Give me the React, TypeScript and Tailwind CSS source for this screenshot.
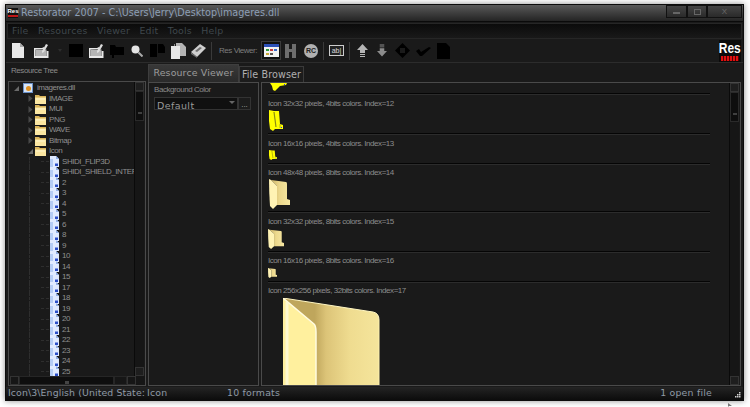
import React from "react";

const treeTop = ["IMAGE", "MUI", "PNG", "WAVE", "Bitmap"];
const iconRows = ["SHIDI_FLIP3D", "SHIDI_SHIELD_INTEF", "2", "3", "4", "5", "6", "8", "9", "10", "14", "15", "17", "18", "19", "20", "21", "22", "23", "24", "25"];

function TreeFolder() {
  return (
    <svg width="11" height="10" viewBox="0 0 11 10" className="shrink-0">
      <path d="M0 1h4l1 1h6v8H0z" fill="#d8b35a" />
      <path d="M0 3.500h11V10H0z" fill="#fbe7a2" />
      <path d="M1 4.500h9v1H1z" fill="#fff6d0" />
    </svg>
  );
}

function PageIcon() {
  return (
    <svg width="9" height="11" viewBox="0 0 9 11" className="shrink-0">
      <path d="M0 0h6l3 3v8H0z" fill="#dfeaff" />
      <path d="M0 3h3v8H0z" fill="#b4ccf4" />
      <path d="M6 0l3 3H6z" fill="#8fb0e8" />
      <rect x="5" y="7.500" width="3" height="2.500" fill="#2a4ec8" />
    </svg>
  );
}

function Arrow({ open }: { open?: boolean }) {
  return (
    <svg width="5" height="7" viewBox="0 0 5 7" className="shrink-0">
      {open ? <path d="M0 6l5-5v5z" fill="#6a6a6a" /> : <path d="M0.500 0l4 3.500-4 3.500z" fill="#4a4a4a" />}
    </svg>
  );
}

function Sep({ className = "" }: { className?: string }) {
  return <div className={"w-px h-[18px] bg-[#3a3a3a] shrink-0 " + className} />;
}

function Divider() {
  return <div className="h-[2px] border-t border-b border-t-[#050505] border-b-[#2c2c2c] mr-[19px] shrink-0" />;
}

const smallText = "text-[8px] tracking-[-0.45px]";

function Caption({ children }: { children: React.ReactNode }) {
  return <div className={smallText + " leading-[10px] text-[#8d8d8d] whitespace-nowrap h-[10px] shrink-0"}>{children}</div>;
}

function Folder48({ w, h, id }: { w: number; h: number; id: string }) {
  return (
    <svg width={w} height={h} viewBox="0 0 21 30" preserveAspectRatio="none">
      <defs>
        <linearGradient id={id} x1="0" y1="0" x2="1" y2="0">
          <stop offset="0" stopColor="#cdb568" />
          <stop offset="0.45" stopColor="#ecd88c" />
          <stop offset="1" stopColor="#f6e7a2" />
        </linearGradient>
      </defs>
      <path d="M2 1L17 3Q18 3 18 5V20L21 21V26H8V7z" fill={`url(#${id})`} />
      <path d="M0 0L2 1L8 7V26L4 30L1 27Q0 14 0 0z" fill="#fff3b4" />
    </svg>
  );
}

function YellowIcon({ w, h }: { w: number; h: number }) {
  return (
    <svg width={w} height={h} viewBox="0 0 14 21" preserveAspectRatio="none">
      <path d="M0 0l5 1 5 0 1 13 3 1v4l-8 0-2 2-3-2-1-8z" fill="#ffff00" />
      <path d="M5 2l2 15" stroke="#8c8c10" strokeWidth="1.200" />
      <path d="M11 14v4" stroke="#b0b010" strokeWidth="1" />
      <rect x="12" y="17" width="1" height="1" fill="#2030ff" />
    </svg>
  );
}

function ScrollV() {
  return (
    <div className="w-[10px] flex flex-col shrink-0 border-l border-[#0a0a0a] bg-[#161616] mr-px">
      <div className="h-[9px] border border-[#333] bg-[#1e1e1e] shrink-0" />
      <div className="h-[30px] bg-[#0e0e0e] border border-[#2a2a2a] flex items-end justify-center shrink-0 pb-[6px]">
        <div className="w-[4px] h-[2px] bg-[#404040]" />
      </div>
      <div className="flex-1" />
      <div className="h-[9px] border border-[#333] bg-[#1e1e1e] shrink-0" />
    </div>
  );
}

function Frame({ className = "", children }: { className?: string; children?: React.ReactNode }) {
  return <div className={"border border-[#4a4a4a] bg-[#1a1a1a] " + className}>{children}</div>;
}

function NewDoc({ className = "" }: { className?: string }) {
  return (
    <svg className={"shrink-0 " + className} width="15" height="15" viewBox="0 0 15 15">
      <path d="M0 5h8l2-1v2L1.500 6.500V13h11V8h2v7H0z" fill="#e8e8e8" />
      <path d="M1.500 6.500h11V13h-11z" fill="#b5b5b5" />
      <path d="M8 8l4-7 2 1-4 7-2 1z" fill="#dedede" />
    </svg>
  );
}

export default function App() {
  return (
    <div className="w-[750px] h-[407px] bg-white relative overflow-hidden pt-[4px] pl-[5px] font-['Liberation_Sans',sans-serif]">
      <div className="w-[739px] h-[397px] bg-[#1a1a1a] flex flex-col shadow-[0_0_6px_rgba(0,0,0,0.45)] border border-[#0c0c0c]">
        {/* title bar */}
        <div className="h-[17px] shrink-0 flex items-start bg-gradient-to-b from-[#5a5a5a] to-[#242424] border-b border-[#0a0a0a]">
          <div className="w-[10px] h-[10px] ml-[2px] mt-[3px] bg-[#111] flex flex-col items-center shrink-0">
            <span className="text-[6px] leading-[7px] font-bold text-white">Res</span>
            <span className="w-full h-[2px] bg-[#c01818]" />
          </div>
          <span className="ml-[3px] mt-[1px] text-[9.650px] leading-[13px] text-[#8d9fb6] font-['DejaVu_Sans',sans-serif] whitespace-nowrap">
            Restorator 2007 - C:\Users\Jerry\Desktop\imageres.dll
          </span>
          <div className="ml-auto flex h-[13px] shrink-0 mr-[1px]">
            <div className="w-[21px] border border-[#111] bg-gradient-to-b from-[#444] to-[#2a2a2a] flex items-end justify-center pb-[3px]">
              <div className="w-[7px] h-[2px] bg-[#666]" />
            </div>
            <div className="w-[20px] border border-[#111] bg-gradient-to-b from-[#444] to-[#2a2a2a] flex items-center justify-center">
              <div className="w-[7px] h-[6px] border border-[#666]" />
            </div>
            <div className="w-[35px] border border-[#111] bg-gradient-to-b from-[#444] to-[#2a2a2a] flex items-center justify-center text-[8px] leading-none text-[#6a6a6a]">X</div>
          </div>
        </div>
        {/* menu */}
        <div className="h-[16px] mx-[1px] mt-[1px] shrink-0 border border-[#262626] bg-gradient-to-b from-[#0b0b0b] to-[#191919] flex items-center pl-[4px] gap-[9.400px] text-[9.400px] tracking-[0.2px] text-[#3f474c] font-['DejaVu_Sans',sans-serif]">
          <span>File</span>
          <span>Resources</span>
          <span>Viewer</span>
          <span>Edit</span>
          <span>Tools</span>
          <span>Help</span>
        </div>
        {/* toolbar */}
        <div className="h-[24px] shrink-0 flex items-center pl-[6px] border-b border-[#2c2c2c] bg-[#1a1a1a]">
          <svg className="shrink-0" width="12" height="15" viewBox="0 0 12 15">
            <path d="M0 0h8l4 4v11H0z" fill="#e8e8e8" />
            <path d="M8 0l4 4H8z" fill="#a8a8a8" />
          </svg>
          <NewDoc className="ml-[10px]" />
          <span className="ml-[9px] w-0 h-0 border-x-[2.500px] border-x-transparent border-t-[3px] border-t-[#2e2e2e] shrink-0" />
          <div className="ml-[7px] w-[14px] h-[13px] bg-black shrink-0" />
          <NewDoc className="ml-[6px]" />
          <svg className="ml-[6px] shrink-0" width="14" height="14" viewBox="0 0 14 14"><path d="M0 1h5l1 2h8v8H4v3H2v-3H0z" fill="#000" /></svg>
          <svg className="ml-[7px] shrink-0" width="12" height="12" viewBox="0 0 12 12">
            <circle cx="4.500" cy="4.500" r="4" fill="#e4e4e4" />
            <path d="M7.500 7.500l4 4" stroke="#aaa" strokeWidth="2" />
          </svg>
          <svg className="ml-[7px] shrink-0" width="15" height="13" viewBox="0 0 15 13"><path d="M0 0h7v13H0zM8 0h5l2 3v6H8z" fill="#000" /></svg>
          <svg className="ml-[6px] shrink-0" width="15" height="16" viewBox="0 0 15 16">
            <path d="M5 0h6l4 4v9H5z" fill="#b4b4b4" />
            <path d="M0 3h9v13H0z" fill="#e6e6e6" />
            <path d="M3 1h1v2H3z" fill="#888" />
          </svg>
          <svg className="ml-[5px] shrink-0" width="15" height="14" viewBox="0 0 15 14">
            <path d="M0 8L9 0l6 4-9 9z" fill="#cfcfcf" />
            <path d="M0 8l6 5v1l-6-4zM4 7l5-4 2 1-5 4z" fill="#6f6f6f" />
          </svg>
          <Sep className="ml-[5px]" />
          <span className={"ml-[7px] w-[38px] shrink-0 text-[#7e7e7e] whitespace-nowrap " + smallText}>Res Viewer:</span>
          <div className="ml-[4px] w-[20px] h-[19px] border border-[#3c3c3c] bg-[#101010] flex items-center justify-center shrink-0">
            <svg width="15" height="13" viewBox="0 0 15 13"><rect width="15" height="13" fill="#f2f2f2" /><rect width="15" height="3" fill="#2c50b8" /><rect x="2" y="5" width="3" height="2" fill="#2e9a3a" /><rect x="6" y="5" width="3" height="2" fill="#c83a3a" /><rect x="10" y="5" width="3" height="2" fill="#3a6ac8" /><rect x="2" y="9" width="3" height="2" fill="#c8a83a" /><rect x="6" y="9" width="3" height="2" fill="#555" /></svg>
          </div>
          <svg className="ml-[4px] shrink-0" width="11" height="14" viewBox="0 0 11 14"><path d="M0 0h4v5h3V0h4v14H7V8H4v6H0z" fill="#6e6e6e" /></svg>
          <div className="ml-[8px] w-[14px] h-[14px] rounded-full bg-[#b0b0b0] flex items-center justify-center text-[7px] font-bold text-[#222] leading-none shrink-0">RC</div>
          <Sep className="ml-[5px]" />
          <div className="ml-[5px] w-[15px] h-[11px] border border-[#ccc] bg-[#222] flex items-center justify-center text-[7px] leading-none text-[#ddd] shrink-0">ab|</div>
          <Sep className="ml-[5px]" />
          <svg className="ml-[7px] shrink-0" width="11" height="13" viewBox="0 0 11 13"><path d="M5.500 0L11 6H8v3H3V6H0zM3 10h5v1H3zM3 12h5v1H3z" fill="#b4b4b4" /></svg>
          <svg className="ml-[9px] shrink-0" width="10" height="13" viewBox="0 0 11 13"><path d="M3 0h5v1H3zM3 2h5v1H3zM3 4h5v3h3l-5.500 6L0 7h3z" fill="#8c8c8c" /></svg>
          <svg className="ml-[8px] shrink-0" width="15" height="15" viewBox="0 0 15 15"><path d="M7.500 0L15 7.500 7.500 15 0 7.500zM5 5v5h5V5z" fill="#000" fillRule="evenodd" /></svg>
          <svg className="ml-[6px] shrink-0" width="15" height="11" viewBox="0 0 15 11"><path d="M0 6l3-2 2 3 8-5 2 1-9 8H4z" fill="#000" /></svg>
          <svg className="ml-[6px] shrink-0" width="13" height="16" viewBox="0 0 13 16"><path d="M0 0h9l4 4v12H0z" fill="#000" /></svg>
          <div className="ml-auto mr-[2px] w-[22px] h-[22px] bg-[#0b0b0b] flex flex-col items-center shrink-0 mt-[1px] overflow-hidden">
            <span className="text-[15px] leading-[15px] font-bold text-white scale-x-[0.8] whitespace-nowrap">Res</span>
            <span className="w-[18px] h-[5px] mt-[1px] bg-[repeating-linear-gradient(90deg,#e01010_0_2px,#500_2px_3px)]" />
          </div>
        </div>
        {/* body */}
        <div className="flex-1 min-h-0 flex pl-[1px] pr-[1px]">
          {/* tree */}
          <div className="w-[141px] shrink-0 flex flex-col">
            <div className={"h-[18px] pl-[4px] pt-[3px] leading-[10px] text-[#8a8a8a] shrink-0 " + smallText}>Resource Tree</div>
            <Frame className="flex-1 min-h-0 flex flex-col ml-[1px] mr-[2px]">
              <div className="flex-1 min-h-0 flex">
                <div className={"flex-1 min-w-0 overflow-hidden pt-[1px] text-[#8f8f8f] " + smallText}>
                  <div className="h-[10.500px] flex items-center pl-[5px] whitespace-nowrap">
                    <Arrow open />
                    <span className="ml-[4px] w-[10px] h-[10px] bg-[#d8e4f4] border border-[#6a90c8] flex items-center justify-center shrink-0"><span className="w-[5px] h-[5px] rounded-full bg-[#e09020]" /></span>
                    <span className="ml-[4px]">imageres.dll</span>
                  </div>
                  {treeTop.map((t) => (
                    <div key={t} className="h-[10.500px] flex items-center pl-[19px] whitespace-nowrap">
                      <Arrow />
                      <span className="ml-[2px] flex shrink-0"><TreeFolder /></span>
                      <span className="ml-[3px]">{t}</span>
                    </div>
                  ))}
                  <div className="h-[10.500px] flex items-center pl-[19px] whitespace-nowrap">
                    <Arrow open />
                    <span className="ml-[2px] flex shrink-0"><TreeFolder /></span>
                    <span className="ml-[3px]">Icon</span>
                  </div>
                  {iconRows.map((t) => (
                    <div key={t} className="h-[10.500px] flex items-center pl-[20px] whitespace-nowrap">
                      <span className="h-full border-l border-dashed border-[#2e2e2e] shrink-0" />
                      <span className="ml-[11px] w-[8px] border-t border-dashed border-[#2e2e2e] shrink-0" />
                      <span className="ml-[1px] flex shrink-0"><PageIcon /></span>
                      <span className="ml-[3px]">{t}</span>
                    </div>
                  ))}
                </div>
                <ScrollV />
              </div>
              <div className="h-[9px] shrink-0 flex bg-[#161616] pl-[1px]">
                <div className="w-[9px] border border-[#333] shrink-0" />
                <div className="w-[95px] bg-[#0e0e0e] border border-[#262626] flex items-end justify-center shrink-0"><div className="w-[4px] h-[3px] bg-[#444]" /></div>
                <div className="w-[13px] border border-[#262626] shrink-0" />
                <div className="w-[9px] border border-[#333] shrink-0" />
              </div>
            </Frame>
          </div>
          {/* tabs + panes */}
          <div className="flex-1 min-w-0 flex flex-col">
            <div className="h-[19px] shrink-0 flex items-end font-['DejaVu_Sans',sans-serif] whitespace-nowrap">
              <div className="w-[91px] h-[18px] bg-gradient-to-b from-[#383838] to-[#2a2a2a] border border-[#3e3e3e] border-b-0 text-[9.400px] leading-[16px] text-center tracking-[0.15px] text-[#9c9c9c]">Resource Viewer</div>
              <div className="w-[65px] h-[16px] bg-[#1c1c1c] border border-[#3a3a3a] border-b-0 text-[9.600px] leading-[16px] text-center text-[#b0b0b0] tracking-[0.1px]">File Browser</div>
            </div>
            <div className="flex-1 min-h-0 flex gap-[2px] pr-[1px]">
              <Frame className="w-[111px] shrink-0 pl-[5px] pt-[2px] overflow-hidden">
                <div className={"leading-[10px] text-[#8a8a8a] " + smallText}>Background Color</div>
                <div className="flex mt-[2px] h-[13px]">
                  <div className="w-[84px] h-[13px] border border-[#333] bg-[#101010] relative overflow-hidden pl-[2px] text-[9.500px] leading-[15px] tracking-[0.4px] text-[#9a9a9a] font-['DejaVu_Sans',sans-serif]">
                    Default
                    <span className="absolute right-[2px] top-[3px] w-0 h-0 border-x-[3px] border-x-transparent border-t-[3px] border-t-[#666]" />
                  </div>
                  <div className="w-[13px] h-[13px] border border-[#333] bg-[#1c1c1c] text-[8px] leading-[13px] text-center text-[#aaa]">...</div>
                </div>
              </Frame>
              <Frame className="flex-1 min-w-0 flex overflow-hidden">
                <div className="flex-1 min-w-0 flex flex-col pl-[6px] overflow-hidden">
                  <div className="h-[10px] shrink-0 pl-[2px] overflow-hidden">
                    <svg width="17" height="8" viewBox="0 0 17 8">
                      <path d="M0 0h17l-1 2-6 1-5 5-2-1-1-4z" fill="#ffff00" />
                      <rect x="14" y="1" width="1" height="1" fill="#2030ff" />
                    </svg>
                  </div>
                  <Divider />
                  <div className="h-[4px] shrink-0" />
                  <Caption>Icon 32x32 pixels, 4bits colors. Index=12</Caption>
                  <div className="h-[24px] shrink-0 pt-[1px] pl-[1px]"><YellowIcon w={14} h={21} /></div>
                  <Divider />
                  <div className="h-[4px] shrink-0" />
                  <Caption>Icon 16x16 pixels, 4bits colors. Index=13</Caption>
                  <div className="h-[14px] shrink-0 pt-[1px] pl-[1px]"><YellowIcon w={8} h={10} /></div>
                  <Divider />
                  <div className="h-[3px] shrink-0" />
                  <Caption>Icon 48x48 pixels, 8bits colors. Index=14</Caption>
                  <div className="h-[33px] shrink-0 pt-[1px] pl-[1px]"><Folder48 w={21} h={30} id="f48" /></div>
                  <Divider />
                  <div className="h-[4px] shrink-0" />
                  <Caption>Icon 32x32 pixels, 8bits colors. Index=15</Caption>
                  <div className="h-[24px] shrink-0 pt-[2px]"><Folder48 w={16} h={20} id="f32" /></div>
                  <Divider />
                  <div className="h-[3px] shrink-0" />
                  <Caption>Icon 16x16 pixels, 8bits colors. Index=16</Caption>
                  <div className="h-[15px] shrink-0 pt-[2px]"><Folder48 w={9} h={10} id="f16" /></div>
                  <Divider />
                  <div className="h-[3px] shrink-0" />
                  <Caption>Icon 256x256 pixels, 32bits colors. Index=17</Caption>
                  <div className="flex-1 min-h-0 pt-[2px] pl-[15px] overflow-hidden">
                    <svg width="97" height="88" viewBox="0 0 97 88">
                      <defs>
                        <linearGradient id="fg" x1="0" y1="0" x2="1" y2="0">
                          <stop offset="0" stopColor="#bfa65c" />
                          <stop offset="0.33" stopColor="#bfa65c" />
                          <stop offset="0.45" stopColor="#dcc478" />
                          <stop offset="0.7" stopColor="#efdc90" />
                          <stop offset="1" stopColor="#f5e59c" />
                        </linearGradient>
                      </defs>
                      <path d="M0 0L90 14Q96 15 96 22V88H0Z" fill="url(#fg)" />
                      <path d="M0 0L90 14Q96 15 96 22" fill="none" stroke="#fff6c2" strokeWidth="1" />
                      <path d="M96 22V88" stroke="#fff3b0" strokeWidth="1" />
                      <path d="M0 0L31 26Q33 28 33 34V88H0Z" fill="#fff09e" />
                      <path d="M0 0L31 26Q33 28 33 34V88" fill="none" stroke="#fffbe0" strokeWidth="1.500" />
                      <path d="M4 4V88" stroke="#fff9d0" strokeWidth="3" />
                    </svg>
                  </div>
                </div>
                <ScrollV />
              </Frame>
            </div>
          </div>
        </div>
        {/* status */}
        <div className="h-[13px] mt-[1px] shrink-0 flex items-center relative bg-gradient-to-b from-[#242424] to-[#0c0c0c] text-[9.400px] text-[#8f9aa6] font-['DejaVu_Sans',sans-serif] whitespace-nowrap tracking-[0.2px]">
          <span className="ml-[2px] w-[139px] shrink-0 tracking-[0.1px]">Icon\3\English (United State:</span>
          <span className="w-[80px] shrink-0">Icon</span>
          <span className="shrink-0">10 formats</span>
          <span className="ml-auto mr-[31px]">1 open file</span>
          <svg className="absolute right-[2px] bottom-[2px]" width="7" height="7" viewBox="0 0 7 7"><path d="M5 1h1.500v1.500H5zM3 3h1.500v1.500H3zM5 3h1.500v1.500H5zM1 5h1.500v1.500H1zM3 5h1.500v1.500H3zM5 5h1.500v1.500H5z" fill="#d0d0d0" /></svg>
        </div>
      </div>
      <svg className="absolute left-[728px] top-[403px]" width="6" height="4" viewBox="0 0 6 4"><path d="M0 0v4l1-1h3z" fill="#777" /></svg>
    </div>
  );
}
